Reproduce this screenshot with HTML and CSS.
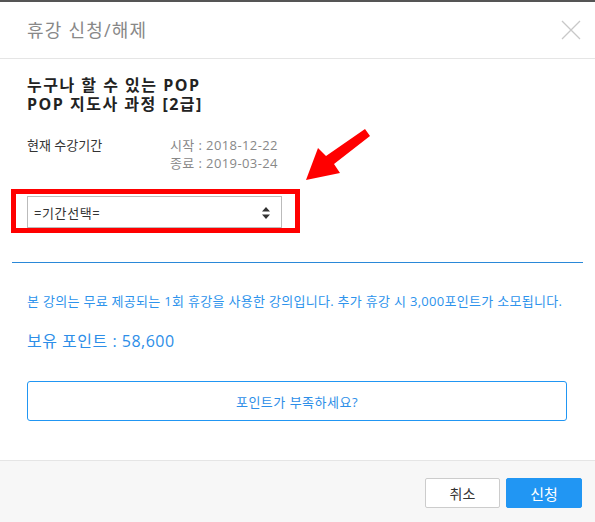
FILE: index.html
```html
<!DOCTYPE html>
<html lang="ko">
<head>
<meta charset="utf-8">
<link rel="stylesheet" href="styles.css">
</head>
<body>
<div class="modal">
  <div class="modal-header">
    <h1 class="modal-title">휴강 신청/해제</h1>
    <button class="close" aria-label="닫기">
      <svg width="20" height="20" viewBox="0 0 20 20"><path d="M1 1 L19 19 M19 1 L1 19" stroke="#c8c8c8" stroke-width="1.3" fill="none"/></svg>
    </button>
  </div>
  <div class="modal-body">
    <div class="inner">
      <h2 class="course">누구나 할 수 있는 POP<br>POP 지도사 과정 [2급]</h2>
      <div class="period">
        <div class="period-label">현재 수강기간</div>
        <div class="period-dates">
          <div>시작 : 2018-12-22</div>
          <div>종료 : 2019-03-24</div>
        </div>
      </div>
    </div>
    <div class="highlight">
      <div class="select">
        <span>=기간선택=</span>
        <svg class="updown" width="10" height="14" viewBox="0 0 10 14"><path d="M5 1 L9 5.5 L1 5.5 Z M5 13 L9 8.5 L1 8.5 Z" fill="#333"/></svg>
      </div>
    </div>
    <svg class="arrow" width="80" height="70" viewBox="0 0 80 70"><path d="M67 3 L72 10 L36 38 L42 47 L8 54 L20 22 L28 30 Z" fill="#ff0000"/></svg>
    <hr class="divider">
    <div class="inner">
      <p class="notice">본 강의는 무료 제공되는 1회 휴강을 사용한 강의입니다. 추가 휴강 시 3,000포인트가 소모됩니다.</p>
      <p class="points">보유 포인트 : 58,600</p>
      <button class="outline-btn">포인트가 부족하세요?</button>
    </div>
  </div>
  <div class="modal-footer">
    <button class="btn btn-cancel">취소</button>
    <button class="btn btn-primary">신청</button>
  </div>
</div>
</body>
</html>
```

FILE: styles.css
```css
* { box-sizing: border-box; }
html, body { margin: 0; padding: 0; background: #fff; }
body {
  font-family: "Open Sans", "Noto Sans CJK KR", sans-serif;
  color: #333;
  width: 595px;
  height: 522px;
  overflow: hidden;
}
.modal {
  border-top: 2px solid #555;
  height: 522px;
  display: flex;
  flex-direction: column;
}
.modal-header {
  height: 57px;
  border-bottom: 1px solid #e5e5e5;
  display: flex;
  align-items: center;
  justify-content: space-between;
  padding: 0 14px 0 27px;
}
.modal-title {
  margin: 0;
  font-size: 18px;
  font-weight: 400;
  color: #888;
  line-height: 24px;
  letter-spacing: 1.2px;
}
.close {
  border: 0;
  background: none;
  padding: 0;
  width: 20px;
  height: 20px;
  display: flex;
  margin-top: -1px;
}
.modal-body {
  position: relative;
  flex: 1;
  padding: 17px 12px 0 12px;
}
.inner { padding: 0 15px; }
.course {
  margin: 0;
  font-size: 16px;
  font-weight: 700;
  line-height: 19px;
  color: #222;
  letter-spacing: 1.5px;
}
.period {
  display: flex;
  margin-top: 22px;
  font-size: 13px;
  line-height: 18px;
}
.period-label { width: 143px; color: #333; }
.period-dates { color: #888; letter-spacing: 0.4px; }
.highlight {
  margin-top: 17px;
  margin-left: -1px;
  width: 289px;
  border: 5px solid #ff0000;
  padding: 2px 13px 0 11px;
  height: 44px;
}
.select {
  height: 32px;
  border: 1px solid #bbb;
  display: flex;
  align-items: center;
  justify-content: space-between;
  padding: 0 10px 0 6px;
  font-size: 13px;
  color: #333;
  background: #fff;
  letter-spacing: 0.6px;
}
.updown { margin-top: 1px; }
.arrow {
  position: absolute;
  left: 298px;
  top: 67px;
}
.divider {
  margin: 29px 0 0 0;
  border: 0;
  border-top: 1px solid #2a88d8;
  height: 0;
}
.notice {
  margin: 29px 0 0 0;
  font-size: 13px;
  line-height: 18px;
  color: #2d93ec;
  white-space: nowrap;
  letter-spacing: 0.3px;
}
.points {
  margin: 20px 0 0 0;
  font-size: 16px;
  line-height: 22px;
  color: #2d8ee8;
  letter-spacing: 0.5px;
}
.outline-btn {
  margin-top: 29px;
  width: 540px;
  height: 40px;
  border: 1px solid #2196f3;
  border-radius: 3px;
  background: #fff;
  color: #2d8ee8;
  font-family: inherit;
  font-size: 13px;
  letter-spacing: 0.5px;
  display: block;
}
.modal-footer {
  height: 62px;
  border-top: 1px solid #e5e5e5;
  background: #f7f7f7;
  display: flex;
  justify-content: flex-end;
  align-items: flex-start;
  gap: 6px;
  padding: 17px 13px 0 0;
}
.btn {
  height: 30px;
  width: 76px;
  border-radius: 2px;
  font-family: inherit;
  font-size: 15px;
}
.btn-cancel {
  width: 75px;
  background: #fff;
  border: 1px solid #ccc;
  color: #333;
  font-size: 14px;
}
.btn-primary {
  background: #2196f3;
  border: 1px solid #2196f3;
  color: #fff;
}
```
